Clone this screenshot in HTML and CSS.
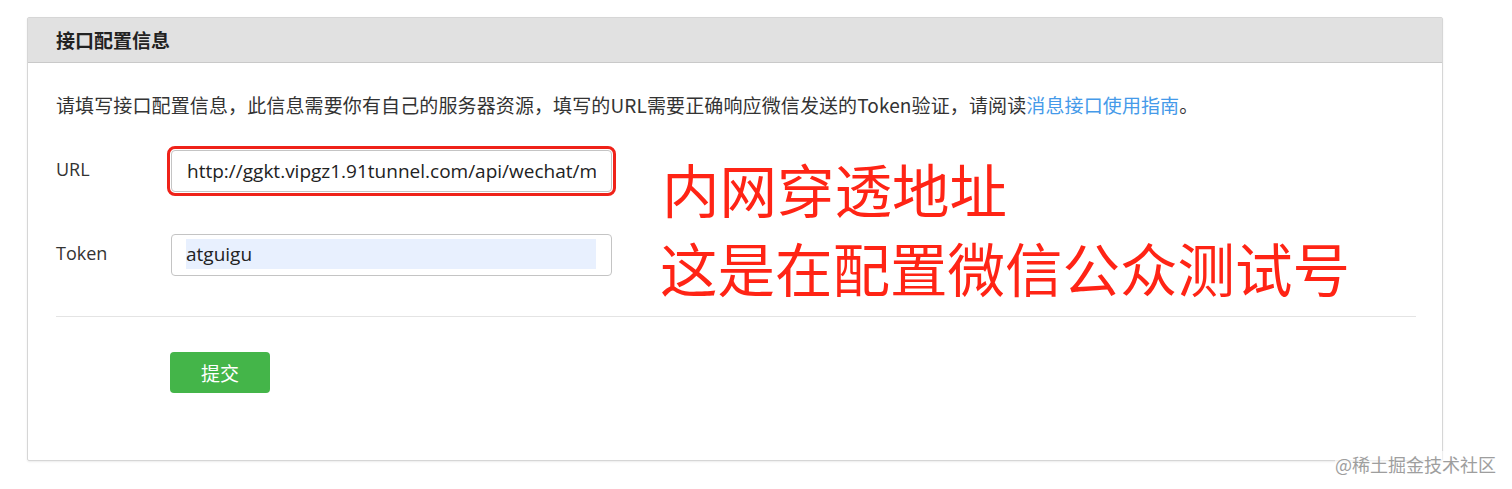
FILE: index.html
```html
<!DOCTYPE html>
<html lang="zh-CN">
<head>
  <meta charset="UTF-8">
  <title>接口配置信息</title>
  <link rel="stylesheet" href="styles.css">
</head>
<body>
  <div class="panel">
    <div class="panel-head">接口配置信息</div>
    <div class="panel-body">
      <p class="desc">请填写接口配置信息，此信息需要你有自己的服务器资源，填写的URL需要正确响应微信发送的Token验证，请阅读<a href="#">消息接口使用指南</a>。</p>

      <form class="config-form">
        <div class="row">
          <label for="url">URL</label>
          <input type="text" id="url" class="marked" value="http://ggkt.vipgz1.91tunnel.com/api/wechat/message">
        </div>
        <div class="row">
          <label for="token">Token</label>
          <input type="text" id="token" class="filled" value="atguigu">
        </div>
        <div class="actions">
          <button type="button">提交</button>
        </div>
      </form>
    </div>

    <!-- 截图上的标注 -->
    <div class="note">
      <div class="note-line">内网穿透地址</div>
      <div class="note-line">这是在配置微信公众测试号</div>
    </div>
  </div>

  <div class="watermark">@稀土掘金技术社区</div>
</body>
</html>
```

FILE: styles.css
```css
body { margin: 0; background: #fff; font-family: "Noto Sans CJK SC", "Noto Sans", sans-serif; color: #333; height: 489px; position: relative; overflow: hidden; }
.panel { position: relative; margin: 17px 0 0 27px; width: 1416px; height: 444px; box-sizing: border-box; border: 1px solid #d6d6d6; border-radius: 2px; box-shadow: 0 1px 2px rgba(0,0,0,0.08); }
.panel-head { height: 44px; line-height: 44px; background: #e1e1e1; border-bottom: 1px solid #c9c9c9; padding-left: 28px; font-size: 19px; font-weight: bold; color: #222; }
.panel-body { padding: 28px 26px 0 28px; }
.desc { margin: 0; font-size: 19px; line-height: 28px; letter-spacing: 0.12px; color: #333; }
.desc a { color: #459ae9; text-decoration: none; }

.config-form { margin-top: 31px; }
.row { display: flex; align-items: center; margin-bottom: 40px; }
.row:first-child { margin-bottom: 42px; }
.row label { width: 115px; font-family: "Open Sans", "Noto Sans CJK SC", sans-serif; font-size: 18px; margin-top: -4px; }
.row input { box-sizing: border-box; width: 441px; height: 42px; padding: 0 15px; border: 1px solid #c4c4c4; border-radius: 4px; font-family: "Open Sans", "Noto Sans CJK SC", sans-serif; font-size: 19px; color: #222; background: #fff; }
.row input.marked { outline: 3px solid #ef2219; outline-offset: 1px; border-radius: 4px; }
.row input.filled { padding: 4px 15px 6px 14px; background-color: #e8f0fe; background-clip: content-box; }

.actions { border-top: 1px solid #e4e4e4; margin-top: 1px; padding: 35px 0 0 114px; }
.actions button { width: 100px; height: 41px; border: none; border-radius: 4px; background: #44b549; color: #fff; font-family: "Noto Sans CJK SC", sans-serif; font-size: 19px; cursor: pointer; }

.note { position: absolute; left: 634px; top: 131px; color: #ff2415; font-size: 57.5px; line-height: 79px; }
.note-line:last-child { margin-left: -2px; }

.watermark { position: absolute; right: 16px; top: 451px; font-size: 18px; color: #9e9e9e; background: rgba(255,255,255,0.6); }
```
